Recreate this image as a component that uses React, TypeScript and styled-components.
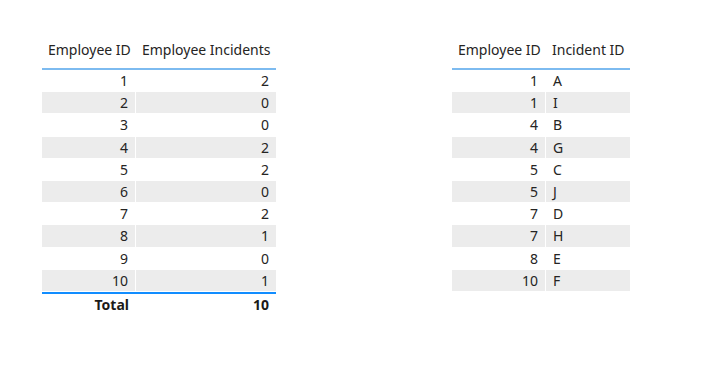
import React from 'react';
import styled, { createGlobalStyle } from 'styled-components';

const GlobalStyle = createGlobalStyle`
  html, body {
    margin: 0;
    padding: 0;
    background: #ffffff;
  }
  body {
    font-family: 'Noto Sans', 'Open Sans', 'Liberation Sans', sans-serif;
  }
`;

const Page = styled.div`
  display: flex;
  align-items: flex-start;
  gap: 176px;
  padding: 38px 0 0 42px;
  width: 706px;
  height: 365px;
  box-sizing: border-box;
`;

const Grid = styled.div<{ $cols: string }>`
  display: grid;
  grid-template-columns: ${(p) => p.$cols};
  font-size: 14px;
  color: #252423;
`;

const HeadCell = styled.div`
  height: 32px;
  box-sizing: border-box;
  padding: 0 6px 7px;
  display: flex;
  align-items: center;
  justify-content: flex-start;
  white-space: nowrap;
  border-bottom: 2px solid #7dbbf0;
`;

const Cell = styled.div<{ $alt: boolean; $right?: boolean; $sep?: boolean }>`
  height: 22.2px;
  box-sizing: border-box;
  padding: 0 7px;
  display: flex;
  align-items: center;
  justify-content: ${(p) => (p.$right ? 'flex-end' : 'flex-start')};
  background: ${(p) => (p.$alt ? '#ececec' : '#ffffff')};
  border-bottom: 1px solid #ffffff;
  border-right: ${(p) => (p.$sep ? '1px solid #ffffff' : 'none')};
  white-space: nowrap;
`;

const TotalCell = styled.div`
  height: 24px;
  box-sizing: border-box;
  padding: 0 7px;
  display: flex;
  align-items: center;
  justify-content: flex-end;
  border-top: 2px solid #118dff;
  font-weight: 700;
  color: #1b1a19;
`;

const incidents = [
  { id: 1, count: 2 },
  { id: 2, count: 0 },
  { id: 3, count: 0 },
  { id: 4, count: 2 },
  { id: 5, count: 2 },
  { id: 6, count: 0 },
  { id: 7, count: 2 },
  { id: 8, count: 1 },
  { id: 9, count: 0 },
  { id: 10, count: 1 },
];

const details: [number, string][] = [
  [1, 'A'],
  [1, 'I'],
  [4, 'B'],
  [4, 'G'],
  [5, 'C'],
  [5, 'J'],
  [7, 'D'],
  [7, 'H'],
  [8, 'E'],
  [10, 'F'],
];

const App: React.FC = () => {
  const total = incidents.reduce((s, r) => s + r.count, 0);
  return (
    <>
      <GlobalStyle />
      <Page>
        <Grid $cols="94px 140px">
          <HeadCell>Employee ID</HeadCell>
          <HeadCell>Employee Incidents</HeadCell>
          {incidents.map((r, i) => (
            <React.Fragment key={r.id}>
              <Cell $alt={i % 2 === 1} $right $sep>{r.id}</Cell>
              <Cell $alt={i % 2 === 1} $right>{r.count}</Cell>
            </React.Fragment>
          ))}
          <TotalCell>Total</TotalCell>
          <TotalCell>{total}</TotalCell>
        </Grid>
        <Grid $cols="94px 84px">
          <HeadCell>Employee ID</HeadCell>
          <HeadCell>Incident ID</HeadCell>
          {details.map(([id, code], i) => (
            <React.Fragment key={i}>
              <Cell $alt={i % 2 === 1} $right $sep>{id}</Cell>
              <Cell $alt={i % 2 === 1}>{code}</Cell>
            </React.Fragment>
          ))}
        </Grid>
      </Page>
    </>
  );
};

export default App;
